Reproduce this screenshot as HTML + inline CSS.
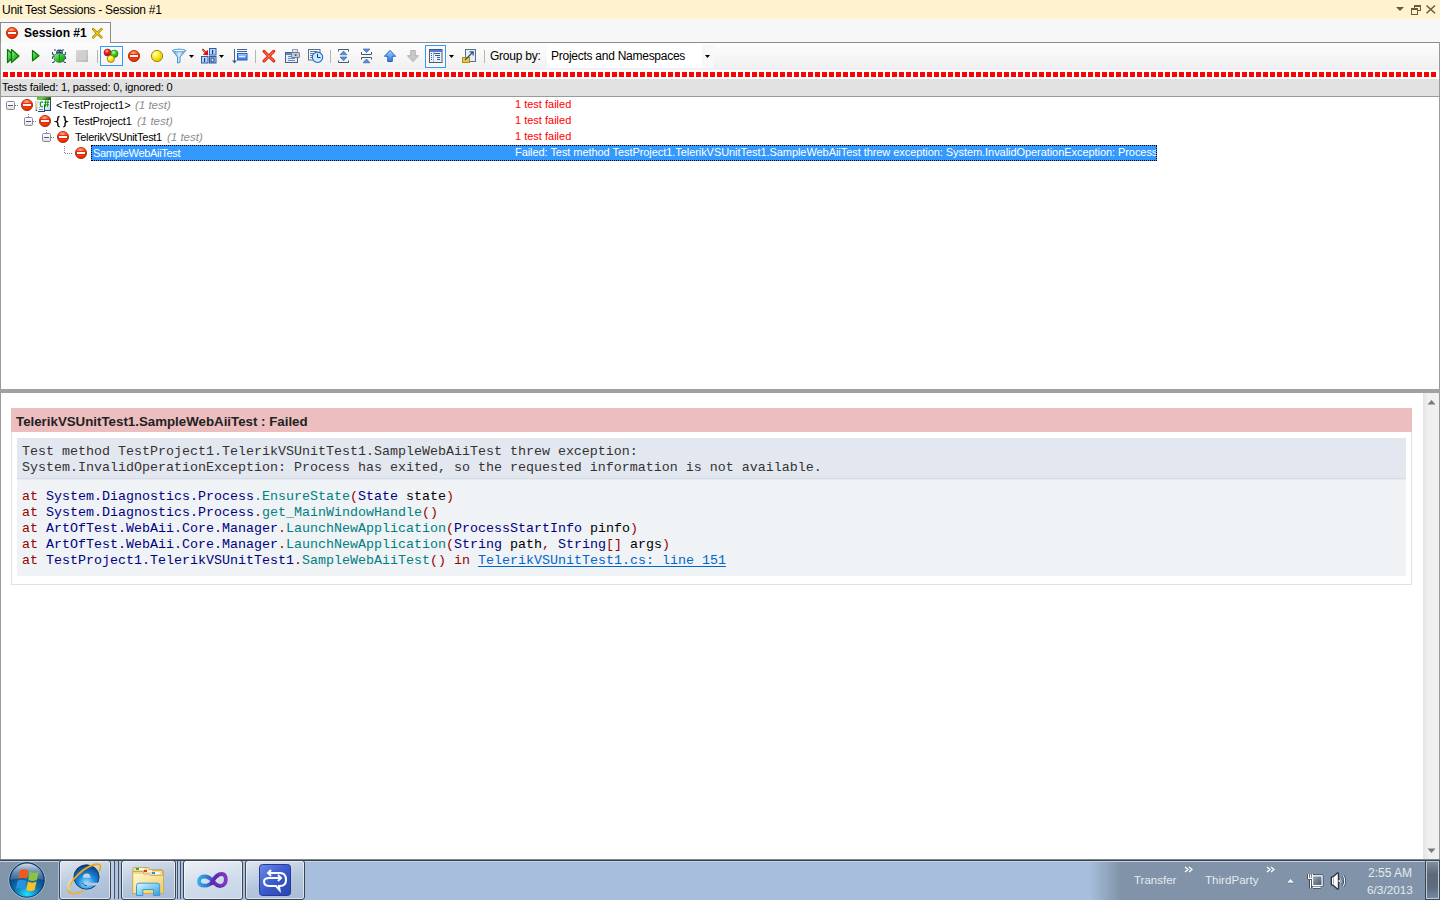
<!DOCTYPE html>
<html><head><meta charset="utf-8">
<style>
*{margin:0;padding:0;box-sizing:border-box}
html,body{width:1440px;height:900px;overflow:hidden;background:#fff}
body{position:relative;font-family:"Liberation Sans",sans-serif;font-size:11px;color:#000}
.a{position:absolute}
.t{position:absolute;white-space:nowrap;line-height:16px}
svg{position:absolute;display:block}
i{font-style:normal}
.m{color:#9a0000}.n{color:#000080}.c{color:#008080}.lk{color:#0066cc;text-decoration:underline;text-underline-offset:2px}
.tbb{border:1px solid #3c4450;border-radius:3px;background:linear-gradient(165deg,#dfe6ef 0,#b4c6dc 55%,#a8bcd6 100%);box-shadow:inset 0 0 0 1px rgba(255,255,255,0.55)}
.act{background:linear-gradient(165deg,#eef2f8 0,#d0dcea 55%,#c4d4e6 100%)}
.tt{color:#e4eaf0;font-size:12px}
.it{font-style:italic;color:#8c8c8c;font-size:11.5px}
.mono{font-family:"Liberation Mono",monospace;font-size:13.33px;line-height:16px;white-space:pre;position:absolute}
</style></head><body>

<svg width="0" height="0" style="position:absolute">
<defs>
<radialGradient id="gStop" cx="0.45" cy="0.25" r="0.8">
<stop offset="0" stop-color="#ffb08a"/><stop offset="0.35" stop-color="#ff5a1e"/><stop offset="0.8" stop-color="#e43000"/><stop offset="1" stop-color="#b01800"/>
</radialGradient>
<linearGradient id="gExp" x1="0" y1="0" x2="0" y2="1"><stop offset="0" stop-color="#ffffff"/><stop offset="0.5" stop-color="#f4f4f4"/><stop offset="1" stop-color="#dcdcdc"/></linearGradient>
<symbol id="stp" viewBox="0 0 12 12">
<circle cx="6" cy="6" r="5.6" fill="url(#gStop)" stroke="#a42000" stroke-width="0.8"/>
<rect x="1.5" y="4.2" width="9" height="3.6" fill="#f01800"/>
<rect x="2" y="5" width="8" height="2" fill="#fff"/>
</symbol>
<symbol id="exp" viewBox="0 0 9 9">
<rect x="0.5" y="0.5" width="8" height="8" rx="1.2" fill="url(#gExp)" stroke="#8a8a8a" stroke-width="1"/>
<rect x="2" y="4" width="5" height="1" fill="#3b57b4"/>
</symbol>
</defs></svg>
<!-- title bar -->
<div class="a" style="left:0;top:0;width:1440px;height:19px;background:#fff2cf"></div>
<div class="t" style="left:2px;top:2px;font-size:12px;letter-spacing:-0.29px;color:#000">Unit Test Sessions - Session #1</div>
<div class="a" style="left:0;top:19px;width:1440px;height:24px;background:#f7f7f7"></div>
<svg style="left:1390px;top:0" width="50" height="19" viewBox="1390 0 50 19">
<path d="M1396 7 h8 l-4 4 z" fill="#6b5a35"/>
<rect x="1414.5" y="5.5" width="6" height="5" fill="none" stroke="#6b5a35"/>
<rect x="1414" y="5" width="7" height="2" fill="#6b5a35"/>
<rect x="1411.5" y="8.5" width="6" height="6" fill="#fff2cf" stroke="#6b5a35"/>
<rect x="1411" y="8" width="7" height="2" fill="#6b5a35"/>
<path d="M1426.5 5.5 L1435 13.3 M1435 5.5 L1426.5 13.3" stroke="#6b5a35" stroke-width="1.5"/>
</svg>


<!-- tab -->
<div class="a" style="left:0;top:22px;width:111px;height:21px;border:1px solid #8c8c8c;border-bottom:none;background:#f9f9f9"></div>
<div class="a" style="left:110px;top:42px;width:1330px;height:1px;background:#8c8c8c"></div>
<div class="t" style="left:24px;top:25px;font-size:12px;font-weight:bold">Session #1</div>
<svg style="left:6px;top:27px" width="12" height="12"><use href="#stp"/></svg>
<svg style="left:92px;top:28px" width="10.5" height="10.5" viewBox="0 0 11 11">
<path d="M1.2 1.2 L9.8 9.8 M9.8 1.2 L1.2 9.8" stroke="#a07800" stroke-width="2.6" stroke-linecap="round"/>
<path d="M1.2 1.2 L9.8 9.8 M9.8 1.2 L1.2 9.8" stroke="#f4d000" stroke-width="1.4" stroke-linecap="round"/>
</svg>


<!-- main frame left/right border -->
<div class="a" style="left:0;top:42px;width:1px;height:817px;background:#9a9a9a"></div>
<div class="a" style="left:1439px;top:42px;width:1px;height:817px;background:#9a9a9a"></div>

<!-- toolbar -->
<div class="a" style="left:1px;top:43px;width:1438px;height:27px;background:linear-gradient(#fdfdfd,#f0f0f0)"></div>
<div class="a" style="left:1px;top:70px;width:1438px;height:9px;background:#fff"></div>
<div class="a" style="left:3px;top:72px;width:1434px;height:5px;background:repeating-linear-gradient(90deg,#f00 0,#f00 5px,transparent 5px,transparent 7px)"></div>


<!-- toolbar icons -->
<svg style="left:0;top:0" width="720" height="72" viewBox="0 0 720 72">
<defs>
<linearGradient id="gGreen" x1="0" y1="0" x2="1" y2="1"><stop offset="0" stop-color="#a8f0a0"/><stop offset="0.5" stop-color="#3cc03c"/><stop offset="1" stop-color="#108a10"/></linearGradient>
<radialGradient id="gRed" cx="0.4" cy="0.3" r="0.7"><stop offset="0" stop-color="#ffc0c0"/><stop offset="0.4" stop-color="#ff2020"/><stop offset="1" stop-color="#b00000"/></radialGradient>
<radialGradient id="gGrn" cx="0.4" cy="0.3" r="0.7"><stop offset="0" stop-color="#d0ffc0"/><stop offset="0.4" stop-color="#40e020"/><stop offset="1" stop-color="#109010"/></radialGradient>
<radialGradient id="gYel" cx="0.35" cy="0.3" r="0.75"><stop offset="0" stop-color="#ffffd0"/><stop offset="0.45" stop-color="#fff020"/><stop offset="1" stop-color="#e0c000"/></radialGradient>
<linearGradient id="gGray" x1="0" y1="0" x2="1" y2="1"><stop offset="0" stop-color="#dcdcdc"/><stop offset="1" stop-color="#b8b8b8"/></linearGradient>
<linearGradient id="gBlue" x1="0" y1="0" x2="0" y2="1"><stop offset="0" stop-color="#a8d0ff"/><stop offset="1" stop-color="#2a78e0"/></linearGradient>
<linearGradient id="gFun" x1="0" y1="0" x2="1" y2="0"><stop offset="0" stop-color="#3a90d0"/><stop offset="0.5" stop-color="#d8f0ff"/><stop offset="1" stop-color="#3a90d0"/></linearGradient>
</defs>
<!-- run all -->
<path d="M7.5 49.5 L14.5 56 L7.5 62.5 Z" fill="url(#gGreen)" stroke="#007a00" stroke-width="1.2" stroke-linejoin="round"/>
<path d="M11.5 49.5 L19 56 L11.5 62.5 Z" fill="url(#gGreen)" stroke="#007a00" stroke-width="1.2" stroke-linejoin="round"/>
<!-- run -->
<path d="M32.5 50.5 L39 55.7 L32.5 60.8 Z" fill="url(#gGreen)" stroke="#007a00" stroke-width="1.2" stroke-linejoin="round"/>
<!-- bug -->
<g stroke="#34507a" stroke-width="1.1" fill="none">
<path d="M55 49 v2 M63 49 v2 M52.5 52 v2 l2 1.5 M65.5 52 v2 l-2 1.5 M52.5 59 v-2 l2 -1 M65.5 59 v-2 l-2 -1 M52 62.5 h1.5 l1.5 -2 M66 62.5 h-1.5 l-1.5 -2"/>
</g>
<ellipse cx="59.5" cy="57.5" rx="5.5" ry="5" fill="url(#gGreen)" stroke="#0a7a0a" stroke-width="0.6"/>
<line x1="59.5" y1="54" x2="59.5" y2="62" stroke="#0a8a0a" stroke-width="0.8"/>
<path d="M56 53.5 Q56 49 59.5 49.5 Q63 49 63 53.5 Z" fill="#2e4a70"/>
<rect x="57.5" y="51" width="1" height="1" fill="#c8d8ee"/><rect x="60.5" y="51" width="1" height="1" fill="#c8d8ee"/>
<!-- stop -->
<rect x="76" y="50" width="12" height="12" fill="url(#gGray)"/>
<rect x="78" y="52" width="8" height="8" fill="#cfcfcf"/>
<!-- separators -->
<g fill="#b4b4b4"><rect x="97" y="50" width="1" height="13"/><rect x="255" y="50" width="1" height="13"/><rect x="330" y="50" width="1" height="13"/><rect x="484" y="50" width="1" height="13"/></g>
<!-- toggled box 1 -->
<rect x="100.5" y="46.5" width="22" height="19" fill="#fbf9f5" fill-opacity="0.5" stroke="#3399ff"/>
<circle cx="107.5" cy="52.5" r="3.5" fill="url(#gRed)" stroke="#8a2020" stroke-width="0.6"/>
<circle cx="114.3" cy="53.8" r="3.7" fill="url(#gGrn)" stroke="#207020" stroke-width="0.6"/>
<circle cx="110.8" cy="58.8" r="3.6" fill="url(#gYel)" stroke="#9a6a10" stroke-width="0.8"/>
<!-- red stop -->
<use href="#stp" x="128" y="50" width="12" height="12"/>
<!-- yellow -->
<circle cx="157" cy="56" r="5.6" fill="url(#gYel)" stroke="#a07a00" stroke-width="0.9"/>
<!-- funnel -->
<path d="M172.5 50.5 Q179 48 185.8 50.5 L180 57 L180 62.5 L177.5 63 L177.5 57 Z" fill="url(#gFun)" stroke="#3a88c8" stroke-width="0.9" stroke-linejoin="round"/>
<ellipse cx="179.2" cy="50.5" rx="6.5" ry="1.3" fill="#e8f6ff" stroke="#3a88c8" stroke-width="0.7"/>
<path d="M189 55 h5 l-2.5 3 z" fill="#000"/>
<!-- binary grid -->
<path d="M201.8 49.8 L203 48.6 L206 51.6 L207.8 49.8 L208.2 55.2 L202.8 54.8 L204.6 53 Z" fill="#d81010"/><path d="M203 50 L205.5 52.5" stroke="#f8c040" stroke-width="0.6"/>
<g fill="#b8d8ff" stroke="#2e5aa8" stroke-width="1">
<rect x="209.5" y="48.5" width="6.5" height="6.5"/><rect x="201.5" y="56.5" width="6.5" height="6.5"/><rect x="209.5" y="56.5" width="6.5" height="6.5"/>
</g>
<g fill="#1a3a7a"><rect x="212" y="50" width="1.2" height="4"/><rect x="204" y="58" width="1.2" height="4"/><rect x="211" y="58" width="3" height="4" fill="none" stroke="#1a3a7a" stroke-width="0.9"/></g>
<path d="M219 55 h5 l-2.5 3 z" fill="#000"/>
<!-- sort -->
<rect x="234" y="49" width="1" height="13" fill="#44628a"/>
<path d="M232 60.5 L234.5 63.5 L237 60.5 Z" fill="#44628a"/>
<rect x="237" y="49" width="10" height="1" fill="#44628a"/><rect x="237" y="51" width="10" height="1" fill="#44628a"/>
<rect x="237.5" y="53.5" width="9.5" height="6.5" fill="url(#gBlue)" stroke="#2a5ad0" stroke-width="1"/>
<rect x="239" y="56" width="6" height="1.2" fill="#e8f0ff"/>
<!-- red X -->
<path d="M264 51.3 L273.8 61 M273.8 51.3 L264 61" stroke="#b01800" stroke-width="3" stroke-linecap="round"/>
<path d="M264 51.3 L273.8 61 M273.8 51.3 L264 61" stroke="#ff3c1c" stroke-width="1.9" stroke-linecap="round"/><path d="M264.5 51.8 L273.3 60.5 M273.3 51.8 L264.5 60.5" stroke="#ffb0a0" stroke-width="0.5"/>
<!-- window printer -->
<rect x="285.5" y="52.5" width="12" height="10" fill="#e8eef8" stroke="#4a6288"/>
<rect x="286" y="53" width="11" height="2" fill="#4a8af0"/>
<g fill="#6a8ac0"><rect x="288" y="56" width="5" height="1"/><rect x="288" y="58" width="7" height="1"/><rect x="288" y="60" width="7" height="1"/></g>
<rect x="292.5" y="49.5" width="5" height="3" fill="#dde2ea" stroke="#8090a8" stroke-width="0.8"/>
<rect x="291.5" y="52.5" width="8" height="5" rx="0.5" fill="#c4ccd8" stroke="#6a7890" stroke-width="0.9"/>
<path d="M294.2 54.5 h3 l-1.5 1.6 z" fill="#222"/>
<!-- doc clock -->
<rect x="308.5" y="49.5" width="11.5" height="10.5" fill="#f4f6fa" stroke="#5a6e90"/>
<g fill="#6a7a90"><rect x="310" y="51" width="7" height="1"/><rect x="310" y="53" width="4" height="1"/><rect x="310" y="55" width="3" height="1"/><rect x="310" y="57" width="3" height="1"/></g>
<circle cx="317.5" cy="57.3" r="5.2" fill="#cfe8ff" stroke="#1a6ad0" stroke-width="1.1"/>
<path d="M317.5 53.8 V57.5 H320.5" stroke="#1a3a6a" stroke-width="1" fill="none"/>
<!-- expand -->
<path d="M338.5 51.5 V49.5 H348.5 V51.5 M338.5 60.5 V62.5 H348.5 V60.5" stroke="#44586e" stroke-width="1" fill="none"/>
<path d="M340 54.8 L343.5 51 L347 54.8 Z M340 57 L343.5 60.8 L347 57 Z" fill="#4a90f0" stroke="#3a5a88" stroke-width="0.6"/>
<!-- collapse -->
<path d="M361.5 52 V54.5 H371.5 V52 M361.5 59.5 V57.5 H371.5 V59.5" stroke="#44586e" stroke-width="1" fill="none"/>
<path d="M363 49 L370 49 L366.5 52.6 Z M363 62.8 L366.5 59 L370 62.8 Z" fill="#4a90f0" stroke="#3a5a88" stroke-width="0.6"/>
<!-- up arrow -->
<path d="M390 50.3 L395.6 56.3 L392.3 56.3 L392.3 61.5 L387.7 61.5 L387.7 56.3 L384.4 56.3 Z" fill="url(#gBlue)" stroke="#1a5ac0" stroke-width="0.9" stroke-linejoin="round"/>
<!-- down arrow gray -->
<path d="M413 61.7 L418.6 55.7 L415.3 55.7 L415.3 50.5 L410.7 50.5 L410.7 55.7 L407.4 55.7 Z" fill="#c8c8c8" stroke="#b0b0b0" stroke-width="0.9" stroke-linejoin="round"/>
<!-- toggled box 2 -->
<rect x="425.5" y="45.5" width="20" height="22" fill="#fbf9f5" fill-opacity="0.5" stroke="#3399ff"/>
<rect x="429.5" y="49.5" width="12.5" height="13" fill="#eef2fa" stroke="#4a5a72"/>
<rect x="430" y="50" width="12" height="2" fill="#4a80e0"/>
<rect x="433" y="52" width="1" height="10" fill="#a8b8d0"/>
<g fill="#3a5890"><rect x="431" y="53" width="1" height="1"/><rect x="431" y="55" width="1" height="1"/><rect x="431" y="57" width="1" height="1"/><rect x="431" y="59" width="1" height="1"/>
<rect x="434" y="53" width="6" height="1"/><rect x="435" y="55" width="5" height="1"/><rect x="437" y="57" width="3" height="1"/><rect x="437" y="59" width="3" height="1"/></g>
<path d="M449 55 h5 l-2.5 3 z" fill="#000"/>
<!-- link -->
<rect x="465.5" y="49.5" width="10" height="12" fill="#e4ecf8" stroke="#5a6e8a"/>
<rect x="462.5" y="57.5" width="7" height="5" fill="#f0c840" stroke="#b08a10"/>
<path d="M465 60 L473 52 M469.5 51.8 H473.2 V55.5" stroke="#34507a" stroke-width="1.2" fill="none"/>
</svg>
<div class="t" style="left:490px;top:48px;font-size:12px;letter-spacing:-0.23px">Group by:</div>
<div class="a" style="left:547px;top:45px;width:167px;height:23px;background:#fff"></div>
<div class="a" style="left:702px;top:45px;width:12px;height:23px;background:#f8f8f8"></div>
<div class="t" style="left:551px;top:48px;font-size:12px;letter-spacing:-0.26px">Projects and Namespaces</div>
<svg style="left:705px;top:55px" width="5" height="3"><path d="M0 0h5l-2.5 3z" fill="#000"/></svg>

<!-- status -->
<div class="a" style="left:1px;top:79px;width:1438px;height:17px;background:#e1e1e1"></div>
<div class="a" style="left:1px;top:96px;width:1438px;height:1px;background:#9a9a9a"></div>
<div class="t" style="left:2px;top:79px;letter-spacing:-0.15px">Tests failed: 1, passed: 0, ignored: 0</div>

<!-- tree -->
<div class="t" style="left:56px;top:97px;letter-spacing:0.1px">&lt;TestProject1&gt;</div><div class="t it" style="left:135px;top:97px">(1 test)</div>
<div class="t" style="left:73px;top:113px;letter-spacing:-0.15px">TestProject1</div><div class="t it" style="left:137px;top:113px">(1 test)</div>
<div class="t" style="left:75px;top:129px;letter-spacing:-0.3px">TelerikVSUnitTest1</div><div class="t it" style="left:167px;top:129px">(1 test)</div>
<div class="a" style="left:91px;top:145px;width:1066px;height:16px;background:#3399ff;border:1px dotted #000"></div>
<div class="t" style="left:93px;top:145px;color:#fff;letter-spacing:-0.3px">SampleWebAiiTest</div>
<div class="t" style="left:515px;top:96px;color:#f00">1 test failed</div>
<div class="t" style="left:515px;top:112px;color:#f00">1 test failed</div>
<div class="t" style="left:515px;top:128px;color:#f00">1 test failed</div>
<div class="t" style="left:515px;top:144px;width:641px;overflow:hidden;color:#fff;letter-spacing:-0.06px">Failed: Test method TestProject1.TelerikVSUnitTest1.SampleWebAiiTest threw exception: System.InvalidOperationException: Process has exited, so the requested information is not available.</div>


<!-- tree icons -->
<svg style="left:6px;top:101px" width="9" height="9"><use href="#exp"/></svg>
<svg style="left:24px;top:117px" width="9" height="9"><use href="#exp"/></svg>
<svg style="left:42px;top:133px" width="9" height="9"><use href="#exp"/></svg>
<svg style="left:21px;top:99px" width="12" height="12"><use href="#stp"/></svg>
<svg style="left:39px;top:115px" width="12" height="12"><use href="#stp"/></svg>
<svg style="left:57px;top:131px" width="12" height="12"><use href="#stp"/></svg>
<svg style="left:75px;top:147px" width="12" height="12"><use href="#stp"/></svg>
<svg style="left:0;top:97px" width="100" height="64">
<g fill="#808080">
<rect x="15" y="8" width="1" height="1"/><rect x="17" y="8" width="1" height="1"/>
<rect x="28" y="17" width="1" height="1"/><rect x="28" y="19" width="1" height="1"/>
<rect x="33" y="24" width="1" height="1"/><rect x="35" y="24" width="1" height="1"/>
<rect x="46" y="33" width="1" height="1"/><rect x="46" y="35" width="1" height="1"/>
<rect x="51" y="40" width="1" height="1"/><rect x="53" y="40" width="1" height="1"/>
<rect x="64" y="49" width="1" height="1"/><rect x="64" y="51" width="1" height="1"/><rect x="64" y="53" width="1" height="1"/><rect x="64" y="55" width="1" height="1"/>
<rect x="65" y="56" width="1" height="1"/><rect x="67" y="56" width="1" height="1"/><rect x="69" y="56" width="1" height="1"/><rect x="71" y="56" width="1" height="1"/>
</g></svg>
<!-- C# project icon -->
<svg style="left:35px;top:96px" width="16" height="16" viewBox="0 0 16 16">
<defs><linearGradient id="gcsh" x1="0" y1="0" x2="1" y2="0.3"><stop offset="0" stop-color="#4ab83a"/><stop offset="0.4" stop-color="#6cd040"/><stop offset="1" stop-color="#1a5a1a"/></linearGradient>
<linearGradient id="gcsd" x1="0" y1="0" x2="1" y2="1"><stop offset="0" stop-color="#ffffff"/><stop offset="0.6" stop-color="#f4f7fd"/><stop offset="1" stop-color="#b8cce8"/></linearGradient>
<linearGradient id="gcsy" x1="0" y1="0" x2="0" y2="1"><stop offset="0" stop-color="#fff4b0"/><stop offset="1" stop-color="#f0a000"/></linearGradient></defs>
<rect x="2" y="4" width="13" height="10" fill="url(#gcsd)"/>
<rect x="2" y="1" width="14" height="3" fill="url(#gcsh)"/>
<rect x="15" y="4" width="1" height="11" fill="#2c4670"/>
<rect x="9" y="14" width="7" height="1" fill="#2c4670"/>
<rect x="0" y="5" width="3" height="10" fill="#c8d4e6"/><rect x="2.3" y="6.3" width="7" height="1" fill="#c0cce0"/>
<rect x="1" y="6" width="1.2" height="8" fill="url(#gcsy)"/>
<rect x="1" y="14" width="1" height="1" fill="#3a4a66"/>
<rect x="2.3" y="7" width="7" height="8.5" fill="#eef3fc"/>
<rect x="9" y="9" width="1" height="7" fill="#2c4670"/>
<rect x="3" y="15" width="7" height="1" fill="#2c4670"/>
<rect x="4" y="13" width="4" height="1" fill="#5a8ae8"/>
<rect x="4" y="11" width="1" height="1" fill="#8aa8e8"/>
<path d="M7.9 6.4 Q7.6 5.8 6.7 5.8 Q5.3 5.8 5.3 8.3 Q5.3 10.8 6.7 10.8 Q7.6 10.8 7.9 10.2" fill="none" stroke="#079a07" stroke-width="1.05"/>
<path d="M10.8 4.2 L10.3 10.8 M13 4.2 L12.5 10.8 M9.2 6.3 H14.2 M9 8.8 H14" stroke="#079a07" stroke-width="1"/>
</svg>
<svg style="left:54px;top:114px" width="16" height="15" viewBox="54 114 16 15">
<path d="M59.6 116.4 Q57.6 116.6 57.8 118.8 Q58.2 121 56.2 121.6 Q58.2 122.2 57.8 124.4 Q57.6 126.6 59.6 126.8" fill="none" stroke="#000" stroke-width="1.35"/>
<path d="M63.3 116.4 Q65.3 116.6 65.1 118.8 Q64.7 121 66.7 121.6 Q64.7 122.2 65.1 124.4 Q65.3 126.6 63.3 126.8" fill="none" stroke="#000" stroke-width="1.35"/>
</svg>
<!-- splitter -->
<div class="a" style="left:0;top:389px;width:1440px;height:4px;background:#a0a0a0"></div>

<!-- scrollbar -->
<div class="a" style="left:1423px;top:393px;width:16px;height:466px;background:linear-gradient(90deg,#e3e3e3,#efefef 30%,#f1f1f1)"></div>
<svg style="left:1427px;top:399px" width="9" height="6"><path d="M0.5 5.5 L4.5 1 L8.5 5.5 Z" fill="#7a7a7a"/></svg>
<svg style="left:1427px;top:848px" width="9" height="6"><path d="M0.5 0.5 L4.5 5 L8.5 0.5 Z" fill="#7a7a7a"/></svg>

<!-- detail -->
<div class="a" style="left:11px;top:408px;width:1401px;height:177px;border:1px solid #dce2e9;border-top:none"></div>
<div class="a" style="left:11px;top:408px;width:1401px;height:24px;background:#edbebf"></div>
<div class="t" style="left:16px;top:414px;font-size:13.3px;font-weight:bold;color:#222">TelerikVSUnitTest1.SampleWebAiiTest : Failed</div>
<div class="a" style="left:17px;top:438px;width:1389px;height:40px;background:#e3e7ef"></div>
<div class="a" style="left:17px;top:478px;width:1389px;height:1px;background:#d6dbe4"></div><div class="a" style="left:17px;top:479px;width:1389px;height:1px;background:#e6eaf0"></div>
<div class="a" style="left:17px;top:480px;width:1389px;height:96px;background:#eff3f6"></div>
<div class="mono" style="left:22px;top:444px;color:#333">Test method TestProject1.TelerikVSUnitTest1.SampleWebAiiTest threw exception:
System.InvalidOperationException: Process has exited, so the requested information is not available.</div>
<div class="mono" style="left:22px;top:489px;color:#000"><i class="m">at</i> <i class="n">System.Diagnostics.Process</i><i class="c">.EnsureState</i><i class="m">(</i><i class="n">State</i> state<i class="m">)</i>
<i class="m">at</i> <i class="n">System.Diagnostics.Process</i><i class="m">.</i><i class="c">get_MainWindowHandle</i><i class="m">()</i>
<i class="m">at</i> <i class="n">ArtOfTest.WebAii.Core.Manager</i><i class="m">.</i><i class="c">LaunchNewApplication</i><i class="m">(</i><i class="n">ProcessStartInfo</i> pinfo<i class="m">)</i>
<i class="m">at</i> <i class="n">ArtOfTest.WebAii.Core.Manager</i><i class="m">.</i><i class="c">LaunchNewApplication</i><i class="m">(</i><i class="n">String</i> path<i class="m">,</i> <i class="n">String</i><i class="m">[]</i> args<i class="m">)</i>
<i class="m">at</i> <i class="n">TestProject1.TelerikVSUnitTest1</i><i class="m">.</i><i class="c">SampleWebAiiTest</i><i class="m">()</i> <i class="m">in</i> <i class="lk">TelerikVSUnitTest1.cs: line 151</i></div>

<!-- taskbar -->
<div class="a" style="left:0;top:859px;width:1440px;height:41px;background:linear-gradient(90deg,#8094aa 0,#8094aa 58px,#a7bfdc 58px,#a7bfdc 1089px,#8093a8 1121px,#8093a8 100%)"></div>
<div class="a" style="left:0;top:859px;width:1440px;height:1px;background:#7d848c"></div>
<div class="a" style="left:0;top:860px;width:1440px;height:1px;background:#3a424c"></div>
<div class="a" style="left:0;top:861px;width:1440px;height:1px;background:#c4d4e6"></div>
<!-- taskbar buttons -->
<div class="a tbb" style="left:59px;top:860px;width:52px;height:40px"></div>
<div class="a" style="left:111px;top:861px;width:4px;height:38px;border-right:1px solid #4a5460;background:#b8cce2"></div>
<div class="a" style="left:115px;top:861px;width:4px;height:38px;border-right:1px solid #4a5460;background:#aec4de"></div>
<div class="a tbb" style="left:121px;top:860px;width:55px;height:40px"></div>
<div class="a" style="left:176px;top:861px;width:2px;height:38px;border-right:1px solid #4a5460;background:#b8cce2"></div>
<div class="a" style="left:178px;top:861px;width:3px;height:38px;border-right:1px solid #4a5460;background:#aec4de"></div>
<div class="a tbb act" style="left:183px;top:860px;width:60px;height:40px"></div>
<div class="a tbb" style="left:245px;top:860px;width:60px;height:40px"></div>
<div class="a" style="left:1425px;top:860px;width:15px;height:40px;background:#3c4652"></div><div class="a" style="left:1426px;top:861px;width:13px;height:38px;border:1px solid #bcc8d4;background:linear-gradient(180deg,#828d9b 0,#5a6878 35%,#5e6c7e 70%,#7488a0 100%)"></div>
<!-- start orb -->
<svg style="left:8px;top:861px" width="38" height="38" viewBox="0 0 38 38">
<defs>
<radialGradient id="orbB" cx="0.5" cy="0.9" r="0.7"><stop offset="0" stop-color="#20e0ff"/><stop offset="0.5" stop-color="#1070b0"/><stop offset="1" stop-color="#0a3a70"/></radialGradient>
<linearGradient id="orbT" x1="0" y1="0" x2="0" y2="1"><stop offset="0" stop-color="#e8f0f8" stop-opacity="0.9"/><stop offset="1" stop-color="#7090b0" stop-opacity="0.4"/></linearGradient>
</defs>
<circle cx="19" cy="19" r="18" fill="url(#orbB)" stroke="#c8d8e8" stroke-width="0.8"/>
<circle cx="19" cy="19" r="17.2" fill="none" stroke="#0a3a6a" stroke-width="1"/>
<path d="M2.5 19 A16.5 16.5 0 0 1 35.5 19 Q19 14 2.5 19Z" fill="url(#orbT)"/>
<g transform="translate(19.3,19.2) scale(1.2,1.1) translate(-17.5,-15.75)"><path d="M11.5 6.5 Q15 5 18.5 7 L17 14.5 Q13.5 13 10 14.5 Z" fill="#f05a20"/>
<path d="M19.5 8 Q23 10 27 8 L25.5 15.5 Q22 17.5 18.2 15.5 Z" fill="#8ac440"/>
<path d="M9.5 16 Q13 14.5 16.8 16.2 L15.5 24 Q12 22 8 23.5 Z" fill="#2a90e0"/>
<path d="M18 17 Q21.5 19 25.2 17 L23.5 24.7 Q20 26.5 16.6 24.7 Z" fill="#ffc020"/></g>
</svg>
<!-- IE -->
<svg style="left:64px;top:860px" width="42" height="38" viewBox="0 0 42 38">
<defs><radialGradient id="ieB" cx="0.5" cy="0.75" r="0.75"><stop offset="0" stop-color="#90e8ff"/><stop offset="0.45" stop-color="#1a8ae0"/><stop offset="1" stop-color="#0a3a80"/></radialGradient></defs>
<ellipse cx="22.5" cy="17" rx="12.6" ry="12.2" fill="url(#ieB)" stroke="#0a2a60" stroke-width="0.8"/>
<path d="M18.8 17.7 Q19 13.4 22.7 13.4 Q26.4 13.4 26.6 17.7 Z" fill="#c4d2e4"/>
<path d="M18.3 22.8 H36 V25.6 H18.3 Q19.5 22.8 18.3 22.8 Z" fill="#b7c8de"/>
<path d="M18.3 22.8 Q20 26 23 25.8" fill="none" stroke="#0a3a80" stroke-width="0.8"/>
<path d="M6.5 33 Q1 30 9 20 Q20 7 31 4.5 Q37 3.3 36.5 7 Q36.3 9.5 35 11" fill="none" stroke="#f0a818" stroke-width="1.8" stroke-linecap="round"/>
<path d="M6.5 33 Q11 35 19 31" fill="none" stroke="#f0b030" stroke-width="1.6" stroke-linecap="round"/>
<path d="M5 30 Q3 25 8 19" fill="none" stroke="#e8e890" stroke-width="2.2" stroke-opacity="0.7"/>
</svg>
<!-- Explorer -->
<svg style="left:126px;top:860px" width="50" height="38" viewBox="0 0 50 38">
<defs><linearGradient id="fold" x1="0" y1="0" x2="1" y2="1"><stop offset="0" stop-color="#fff8d0"/><stop offset="1" stop-color="#f0cc60"/></linearGradient>
<linearGradient id="fbl" x1="0" y1="0" x2="1" y2="1"><stop offset="0" stop-color="#e0f8ff"/><stop offset="0.5" stop-color="#80d0f0"/><stop offset="1" stop-color="#3a98d8"/></linearGradient></defs>
<path d="M6.6 11.5 L7.5 7.5 H22.5 L23.5 9.5 H36.5 L37.5 11.5 Z" fill="#f0dca0" stroke="#c8a858" stroke-width="0.9"/>
<path d="M6.6 11.5 H37.5 V33.5 H6.6 Z" fill="#f0d890" stroke="#c8a858" stroke-width="0.9"/>
<path d="M7.5 14 H23 L24.5 15.5 H36.5 V33 H7.5 Z" fill="url(#fold)"/>
<path d="M17.5 10.5 H36.5 V15.5 H24.5 L23 14 H17.5 Z" fill="#f0dca0" stroke="#c8a858" stroke-width="0.8"/>
<rect x="10" y="8" width="3" height="2" fill="#10c020"/><rect x="13" y="8.3" width="5" height="1.5" fill="#fff"/>
<rect x="18" y="10" width="3" height="2" fill="#e03020"/><rect x="21" y="10.3" width="5" height="1.5" fill="#fff"/>
<rect x="26" y="12" width="3" height="2" fill="#2090f0"/><rect x="29" y="12.3" width="5" height="1.5" fill="#fff"/>
<path d="M10.5 35.5 V25.5 Q10.5 23.2 13 23.2 H31.5 Q33.7 23.2 33.7 25.5 V35.5 H27.5 V29.5 H16.8 V35.5 Z" fill="url(#fbl)" stroke="#3a98d8" stroke-width="1"/>
</svg>
<!-- VS infinity -->
<svg style="left:192px;top:866px" width="40" height="28" viewBox="0 0 40 28">
<defs><linearGradient id="vsg" gradientUnits="userSpaceOnUse" x1="5" y1="12" x2="36" y2="16"><stop offset="0" stop-color="#38b8f0"/><stop offset="0.35" stop-color="#2a78d0"/><stop offset="0.55" stop-color="#6a2ab8"/><stop offset="1" stop-color="#8a3ac0"/></linearGradient></defs>
<path d="M20.5 15.5 C23 10.5 26.5 8 29.5 8 C33.5 8 34 12 33.8 14.5 C33.5 18.5 30.5 20.2 27.5 19.8 C24 19.3 22 17 20.5 15 C18.5 12.3 16 10.5 12.5 10.5 C8.5 10.5 7 13 7 15 C7 18.5 9.5 19.7 12.5 19.7 C16 19.7 18.5 18.5 20.5 15.5 Z" fill="none" stroke="url(#vsg)" stroke-width="3.8" stroke-linejoin="round"/>
<path d="M18 18.5 C19.5 17.5 20 16.5 21 15 C22.5 12.5 24.5 10 27 9.5" fill="none" stroke="#5a2ab0" stroke-width="3" opacity="0.85"/>
<path d="M23.5 19.5 C26 21.5 30 21.5 32.5 19.5" fill="none" stroke="#2a2a90" stroke-width="1" opacity="0.6"/>
</svg>
<!-- blue app -->
<svg style="left:259px;top:864px" width="32" height="32" viewBox="0 0 32 32">
<defs><linearGradient id="bap" x1="0" y1="0" x2="1" y2="1"><stop offset="0" stop-color="#6a8ae8"/><stop offset="0.5" stop-color="#3a5ad0"/><stop offset="1" stop-color="#2a44b0"/></linearGradient></defs>
<rect x="0.5" y="0.5" width="31" height="31" rx="3" fill="url(#bap)" stroke="#2a3a90"/>
<path d="M12 6 L9 9 L12 12 M9.5 9 H21 Q27 9 27 16 Q27 22 21 22 H20 L20.5 26 L17 22 H11 Q5 22 5 17.5 Q5 14 10 14 H22 M19 11 L22 14 L19 17" fill="none" stroke="#fff" stroke-width="2"/>
</svg>
<!-- tray -->
<div class="t tt" style="left:1134px;top:872px;font-size:11.5px">Transfer</div>
<div class="t tt" style="left:1205px;top:872px;font-size:11.6px">ThirdParty</div>
<svg style="left:1184px;top:866px" width="100" height="8" viewBox="0 0 100 8">
<path d="M1 1 L4 3.5 L1 6 M5 1 L8 3.5 L5 6 M83 1 L86 3.5 L83 6 M87 1 L90 3.5 L87 6" stroke="#fff" stroke-width="1.3" fill="none"/>
</svg>
<svg style="left:1285px;top:877px" width="11" height="7"><path d="M1.5 6 L5.5 1.5 L9.5 6 Z" fill="#f4f8fc" stroke="#5a6a80" stroke-width="0.6"/></svg>
<svg style="left:1300px;top:866px" width="52" height="28" viewBox="0 0 52 28">
<defs><linearGradient id="scr" x1="0" y1="0" x2="1" y2="1"><stop offset="0" stop-color="#9aa8ba"/><stop offset="1" stop-color="#445468"/></linearGradient></defs>
<g stroke="#2a3240" stroke-width="2.6" fill="none" stroke-linejoin="round">
<rect x="12.5" y="9.8" width="9.6" height="9.8"/>
<path d="M13 21.3 H20.6"/>
<path d="M10.5 14 V22.5"/>
<path d="M8.6 8 V12.3 H12.4 V8"/>
<path d="M32 11.5 H33.3 L37.8 7.5 V22.5 L33.3 18.5 H32 Z"/>
</g>
<rect x="12.5" y="9.8" width="9.6" height="9.8" fill="url(#scr)" stroke="#fff" stroke-width="1.3"/>
<path d="M13 21.3 H20.6" stroke="#fff" stroke-width="1.3"/>
<path d="M10.5 14 V22.5" stroke="#fff" stroke-width="1.1"/>
<path d="M8.6 8 V12.3 H12.4 V8 M10.5 8.5 V11.5" stroke="#fff" stroke-width="1.2" fill="none"/>
<path d="M32 11.5 H33.3 L37.8 7.5 V22.5 L33.3 18.5 H32 Z" fill="#fff"/>
<rect x="33.2" y="11.8" width="0.8" height="6.5" fill="#8898a8"/>
<path d="M40.6 12.2 Q41.8 15 40.6 17.8 M43.4 9.8 Q46 15 43.4 20.2" stroke="#2a3240" stroke-width="2.4" fill="none"/>
<path d="M40.6 12.2 Q41.8 15 40.6 17.8 M43.4 9.8 Q46 15 43.4 20.2" stroke="#f4f6f8" stroke-width="1.1" fill="none"/>
<circle cx="39.3" cy="15" r="0.9" fill="#f0f4f8"/>
</svg>
<div class="t tt" style="left:1368px;top:865px;font-size:12px">2:55 AM</div>
<div class="t tt" style="left:1367px;top:882px;font-size:11.8px">6/3/2013</div>


</body></html>
